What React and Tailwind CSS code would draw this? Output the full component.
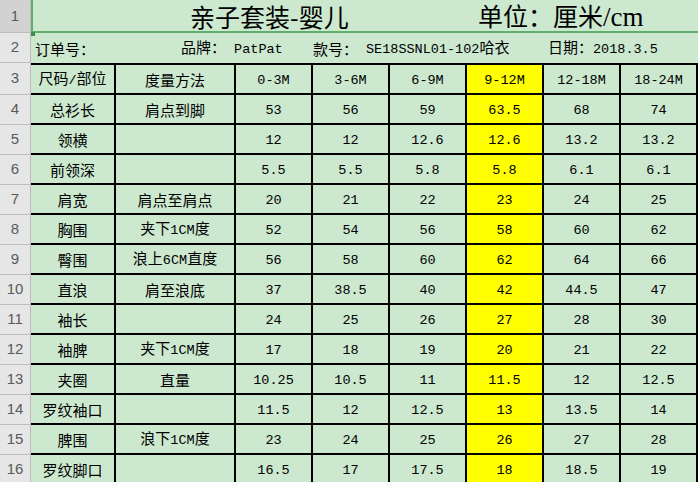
import React from 'react';

const rows = [
  ['尺码/部位', '度量方法', '0-3M', '3-6M', '6-9M', '9-12M', '12-18M', '18-24M'],
  ['总衫长', '肩点到脚', '53', '56', '59', '63.5', '68', '74'],
  ['领横', '', '12', '12', '12.6', '12.6', '13.2', '13.2'],
  ['前领深', '', '5.5', '5.5', '5.8', '5.8', '6.1', '6.1'],
  ['肩宽', '肩点至肩点', '20', '21', '22', '23', '24', '25'],
  ['胸围', '夹下1CM度', '52', '54', '56', '58', '60', '62'],
  ['臀围', '浪上6CM直度', '56', '58', '60', '62', '64', '66'],
  ['直浪', '肩至浪底', '37', '38.5', '40', '42', '44.5', '47'],
  ['袖长', '', '24', '25', '26', '27', '28', '30'],
  ['袖脾', '夹下1CM度', '17', '18', '19', '20', '21', '22'],
  ['夹圈', '直量', '10.25', '10.5', '11', '11.5', '12', '12.5'],
  ['罗纹袖口', '', '11.5', '12', '12.5', '13', '13.5', '14'],
  ['脾围', '浪下1CM度', '23', '24', '25', '26', '27', '28'],
  ['罗纹脚口', '', '16.5', '17', '17.5', '18', '18.5', '19'],
];

const widths = ['w-[85px]', 'w-[120px]', 'w-[77px]', 'w-[77px]', 'w-[77px]', 'w-[77px]', 'w-[77px]', 'w-[77px]'];

// split CJK and ascii runs so latin gets the narrow mono look
const Txt = ({ s }) => {
  const parts = s.match(/[\x00-\x7f]+|[^\x00-\x7f]+/g) || [];
  return (
    <span className="whitespace-pre">
      {parts.map((p, i) =>
        /^[\x00-\x7f]/.test(p) ? (
          <span key={i} className="font-['Liberation_Mono',monospace] text-[13.5px]">{p}</span>
        ) : (
          <span key={i}>{p}</span>
        )
      )}
    </span>
  );
};

const RowHead = ({ n, dark, h }) => (
  <div
    className={`${h} w-[31px] shrink-0 flex items-center justify-center border-r border-b border-[#bdbdbd] text-[15px] text-[#5a5a5a] font-['Liberation_Sans',sans-serif] ${dark ? 'bg-[#d2d2d2]' : 'bg-[#e6e6e6]'}`}
  >
    {n}
  </div>
);

export default function App() {
  return (
    <div className="w-[698px] h-[482px] overflow-hidden bg-[#cce8cf] text-black font-['Noto_Sans_CJK_SC',sans-serif] text-[15px]">
      {/* row 1 - title */}
      <div className="flex h-[33px]">
        <RowHead n="1" dark h="h-[33px]" />
        <div className="relative flex-1 flex items-center pt-[2px] border-l-2 border-b-2 border-[#5fae6b] text-[25px] leading-none">
          <span className="ml-[157px] w-[288px]">亲子套装-婴儿</span>
          <span>
            单位：厘米<span className="font-['Liberation_Serif',serif] text-[27px]">/cm</span>
          </span>
          <div className="absolute -left-[2px] -bottom-[5px] w-[4px] h-[4px] bg-[#3f8f4c]" />
        </div>
      </div>

      {/* row 2 - order info */}
      <div className="flex h-[30px]">
        <RowHead n="2" h="h-[30px]" />
        <div className="flex-1 flex items-center leading-none">
          <span className="ml-[4px] w-[146px]">订单号：</span>
          <span className="w-[132px]"><Txt s="品牌： PatPat" /></span>
          <span className="w-[53px]">款号：</span>
          <span className="w-[182px]"><Txt s="SE18SSNL01-102哈衣" /></span>
          <span><Txt s="日期：2018.3.5" /></span>
        </div>
      </div>

      {/* size table */}
      {rows.map((r, ri) => (
        <div key={ri} className={`flex ${ri === 0 ? 'h-[32px]' : 'h-[30px]'}`}>
          <RowHead n={ri + 3} h={ri === 0 ? 'h-[32px]' : 'h-[30px]'} />
          {r.map((c, ci) => (
            <div
              key={ci}
              className={`${widths[ci]} shrink-0 flex items-center justify-center border-r-2 border-b-2 border-black leading-none ${ri === 0 ? 'border-t-2' : ''} ${ci === 5 ? 'bg-[#ffff00]' : ''}`}
            >
              <Txt s={c} />
            </div>
          ))}
        </div>
      ))}
    </div>
  );
}
